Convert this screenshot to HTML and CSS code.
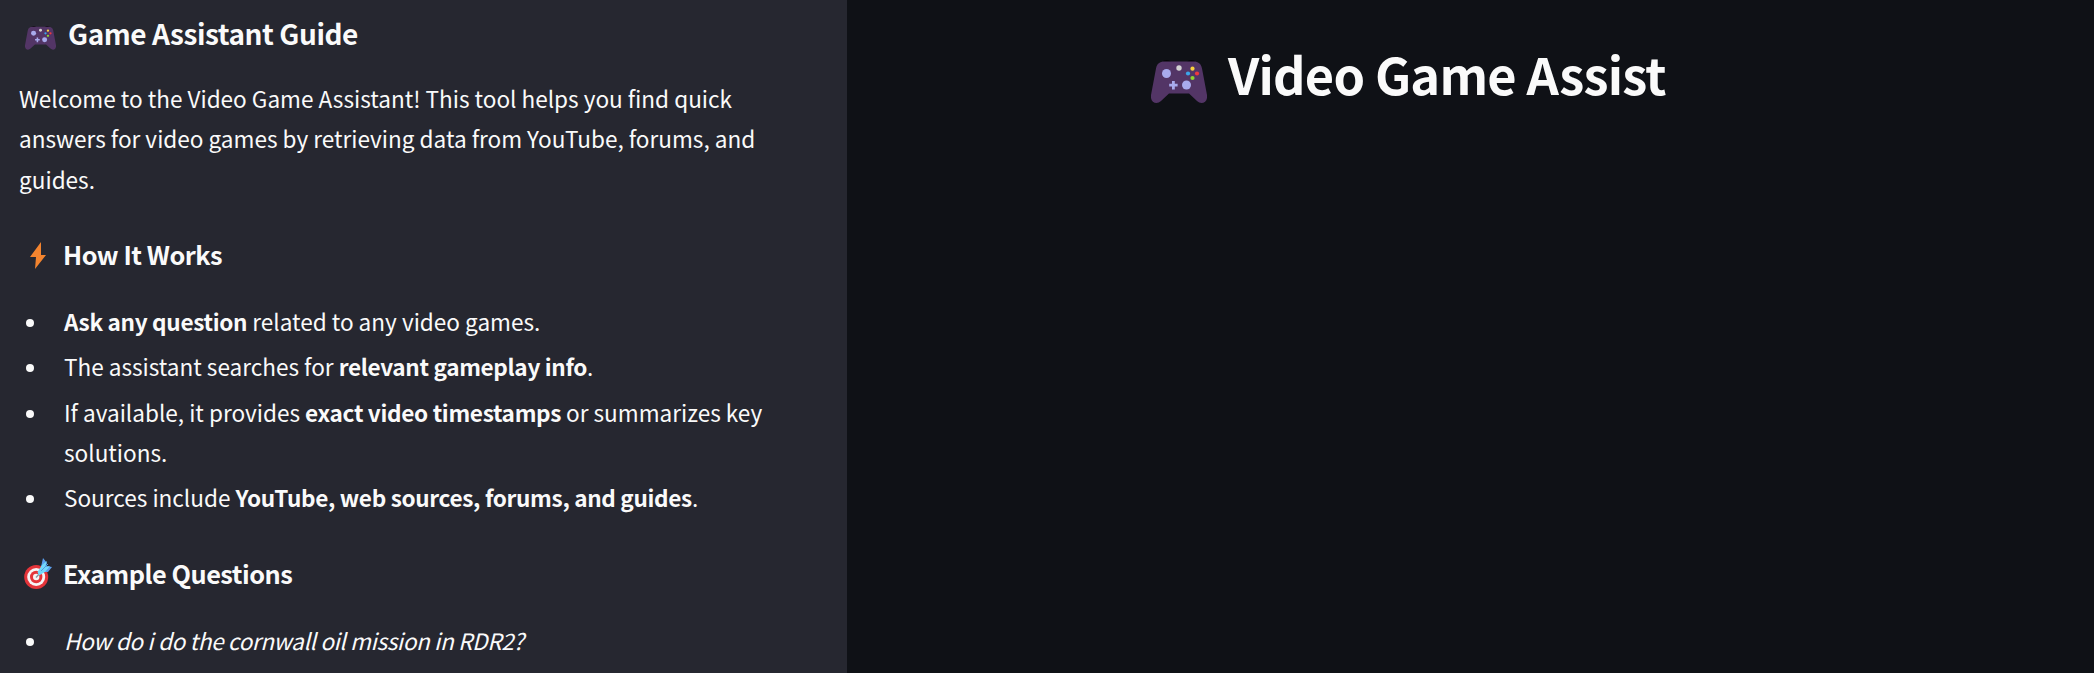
FILE: index.html
```html
<!DOCTYPE html>
<html lang="en">
<head>
<meta charset="utf-8">
<title>Video Game Assist</title>
<link rel="stylesheet" href="styles.css">
</head>
<body>
<svg class="defs" width="0" height="0" aria-hidden="true">
  <symbol id="gamepad" viewBox="0 0 56 44">
    <path fill="#050507" d="M10 4Q12 1 16 1Q19 1 21 4ZM35 4Q37 1 40 1Q44 1 46 4Z"/>
    <path fill="#533566" d="M13 2.500H43C47 2.500 50 4.500 51 9.500L56 36C57 44 50 46 46 42L38 34.500H18L10 42C6 46-1 44 0 36L5 9.500C6 4.500 9 2.500 13 2.500Z"/>
    <circle fill="#a9abed" cx="15.500" cy="14.500" r="4.500"/>
    <circle fill="#a9abed" cx="35.500" cy="26" r="4.500"/>
    <path fill="#a9abed" d="M21 22h2.800v2.800h2.800v2.800h-2.800v2.800h-2.800v-2.800h-2.800v-2.800h2.800z"/>
    <circle fill="#d3d3d3" cx="28" cy="9" r="2.700"/>
    <circle fill="#f9d13f" cx="41.500" cy="9.700" r="2.100"/>
    <circle fill="#3ca5ea" cx="37" cy="14.500" r="2.100"/>
    <circle fill="#ee3940" cx="46" cy="14.500" r="2.100"/>
    <circle fill="#8ed52c" cx="41.500" cy="19" r="2.100"/>
  </symbol>
</svg>
<div class="app">
  <aside class="sidebar">
    <h2 class="guide-title"><svg class="pad-small"><use href="#gamepad"/></svg><span>Game Assistant Guide</span></h2>
    <p class="intro">Welcome to the Video Game Assistant! This tool helps you find quick<br>answers for video games by retrieving data from YouTube, forums, and<br>guides.</p>
    <h3 class="section-title">
      <svg class="bolt" viewBox="0 0 16 27"><path fill="#f3842f" d="M11 0 0 15H6L5 27 16 13H11Z"/></svg>
      <span>How It Works</span>
    </h3>
    <ul class="list">
      <li><b>Ask any question</b> related to any video games.</li>
      <li>The assistant searches for <b>relevant gameplay info</b>.</li>
      <li>If available, it provides <b>exact video timestamps</b> or summarizes key<br>solutions.</li>
      <li>Sources include <b>YouTube, web sources, forums, and guides</b>.</li>
    </ul>
    <h3 class="section-title">
      <svg class="target" viewBox="0 0 28 32">
        <circle cx="12.200" cy="19" r="12" fill="#e4343a"/>
        <circle cx="12.200" cy="19" r="9" fill="#f7f4f6"/>
        <circle cx="12.200" cy="19" r="6.200" fill="#e4343a"/>
        <circle cx="12.200" cy="19" r="3.200" fill="#f7f4f6"/>
        <path d="M12 19.500 17 14" stroke="#8c9aa5" stroke-width="1.500"/>
        <path fill="#5b9fee" d="M17 9 19 0 23 5 22 8 28 9 24 14 18 14Z"/>
        <path fill="#72d8fb" d="M13.500 14 18 7 23 3 21 9 26 8 21 14 15 17.500Z"/>
        <path d="M17 13 24 6" stroke="#4f98e8" stroke-width="1"/>
      </svg>
      <span>Example Questions</span>
    </h3>
    <ul class="list">
      <li><i>How do i do the cornwall oil mission in RDR2?</i></li>
    </ul>
  </aside>
  <main class="main">
    <h1 class="title"><svg class="pad-large"><use href="#gamepad"/></svg><span>Video Game Assist</span></h1>
  </main>
</div>
</body>
</html>
```
FILE: styles.css
```css
* { box-sizing: border-box; }
body {
  margin: 0;
  background: #0f1116;
  color: #fafafa;
  font-family: "Noto Sans CJK SC", "Noto Sans", sans-serif;
  font-size: 22.57px;
  line-height: 40.3px;
}
b { letter-spacing: -0.32px; }
i { letter-spacing: -0.36px; }
.defs { display: block; position: absolute; }
.app { display: flex; height: 673px; overflow: hidden; }
.sidebar { width: 847px; flex: none; padding: 16px 0 0 19px; background: #262730; white-space: nowrap; }
h1, h2, h3, p, ul { margin: 0; }
.guide-title { display: flex; height: 34px; font-size: 28px; line-height: 34px; letter-spacing: -0.44px; }
.pad-small { width: 31px; height: 25px; margin: 9px 12px 0 6px; }
.intro { margin-top: 29px; }
.section-title { display: flex; height: 30px; margin-top: 39.3px; font-size: 25.3px; line-height: 30px; letter-spacing: -0.48px; }
.bolt { width: 16px; height: 27px; margin: 3px 17px 0 11px; }
.target { width: 28px; height: 32px; margin: 0 11px 0 5px; }
.list { margin-top: 32.7px; padding: 0; list-style: none; }
.list li { position: relative; padding-left: 45px; margin-bottom: 5.1px; }
.list li:last-child { margin-bottom: 0; }
.list li::before {
  content: "";
  position: absolute;
  left: 7px;
  top: 17px;
  width: 8px;
  height: 8px;
  border-radius: 50%;
  background: #fafafa;
}
.main { flex: 1; padding: 43px 0 0 304px; }
.title { display: flex; font-size: 50.5px; line-height: 60px; letter-spacing: -0.77px; white-space: nowrap; }
.pad-large { width: 56px; height: 44px; margin: 16px 21px 0 0; }
```
